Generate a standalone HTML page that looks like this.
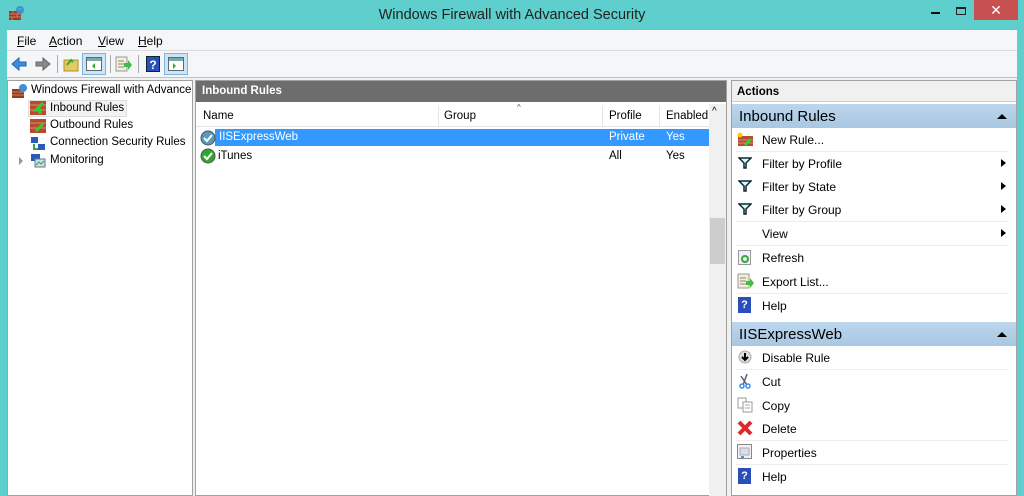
<!DOCTYPE html>
<html><head><style>
*{margin:0;padding:0;box-sizing:border-box}
body{width:1024px;height:496px;background:#5ecfcc;font-family:"Liberation Sans",sans-serif;font-size:11.5px;color:#000;position:relative;overflow:hidden}
.a{position:absolute;white-space:nowrap}
.title{left:0;top:7px;width:1024px;text-align:center;font-size:14.5px;color:#222}
.client{left:7px;top:30px;width:1010px;height:466px;background:#f0f0f0}
.menu{left:7px;top:30px;width:1010px;height:21px;background:#f5f6f7;border-bottom:1px solid #dadbdc}
.menu span{position:absolute;top:4px;font-size:12px}
.tb{left:7px;top:51px;width:1010px;height:27px;background:#f5f6f7;border-bottom:1px solid #bfc0c1}
.pane{background:#fff;border:1px solid #a0a0a0}
.act{position:absolute;left:762px;font-size:12px}
.sep{position:absolute;left:736px;width:272px;height:1px;background:#eceeee}
.tri{position:absolute;left:1001px;width:0;height:0;border-left:5px solid #000;border-top:4px solid transparent;border-bottom:4px solid transparent}
.funnel{position:absolute;left:738px;width:14px;height:12px}
</style></head><body>
<div class="a title">Windows Firewall with Advanced Security</div>
<svg class="a" style="left:8px;top:5px" width="18" height="16"><rect x="1" y="6" width="12" height="9" fill="#9a3a22"/><path d="M1 9h12M1 12h12M5 6v3M9 9v3M4 12v3" stroke="#d08060"/><circle cx="12" cy="5" r="4" fill="#3d8fd8"/><path d="M10 4h4" stroke="#6c6"/></svg>
<div class="a" style="left:931px;top:12px;width:9px;height:2px;background:#111"></div>
<div class="a" style="left:956px;top:7px;width:10px;height:8px;border:1px solid #222;border-top:2px solid #222"></div>
<div class="a" style="left:974px;top:0;width:44px;height:20px;background:#c75050;color:#fff;text-align:center;font-size:14px;line-height:20px">✕</div>
<div class="a client"></div>
<div class="a menu"><span style="left:10px"><u>F</u>ile</span><span style="left:42px"><u>A</u>ction</span><span style="left:91px"><u>V</u>iew</span><span style="left:131px"><u>H</u>elp</span></div>
<div class="a tb"></div>
<svg class="a" style="left:10px;top:55px" width="44" height="18"><path d="M2 9l7-6v4h7v4H9v4z" fill="#3b8ee0" stroke="#2266aa"/><path d="M40 9l-7-6v4h-7v4h7v4z" fill="#8a8a8a" stroke="#666"/></svg>
<div class="a" style="left:57px;top:55px;width:1px;height:18px;background:#aaa"></div>
<svg class="a" style="left:63px;top:56px" width="16" height="16"><rect x="1" y="4" width="14" height="11" fill="#e8c860" stroke="#b09030"/><path d="M4 9l4-5 2 2" stroke="#3a3" stroke-width="2" fill="none"/></svg>
<div class="a" style="left:82px;top:53px;width:24px;height:22px;background:#cce4f7;border:1px solid #7fb4e0"></div>
<svg class="a" style="left:86px;top:57px" width="16" height="15"><rect x=".5" y=".5" width="15" height="13" fill="#fff" stroke="#666"/><rect x="1" y="1" width="14" height="3" fill="#7aa"/><path d="M9 6l-3 3 3 3z" fill="#3a3"/></svg>
<div class="a" style="left:110px;top:55px;width:1px;height:18px;background:#aaa"></div>
<svg class="a" style="left:115px;top:56px" width="18" height="16"><rect x="1" y="1" width="11" height="14" fill="#f3f0d8" stroke="#999"/><path d="M3 5h6M3 8h6M3 11h6" stroke="#888"/><path d="M9 7h4v-3l4 5-4 5v-3H9z" fill="#4b4"/></svg>
<div class="a" style="left:138px;top:55px;width:1px;height:18px;background:#aaa"></div>
<div class="a" style="left:146px;top:56px;width:14px;height:16px;background:#2b4fb8;color:#fff;font-weight:bold;font-size:12px;text-align:center;line-height:16px;border:1px solid #123">?</div>
<div class="a" style="left:164px;top:53px;width:24px;height:22px;background:#cce4f7;border:1px solid #7fb4e0"></div>
<svg class="a" style="left:168px;top:57px" width="16" height="15"><rect x=".5" y=".5" width="15" height="13" fill="#fff" stroke="#666"/><rect x="1" y="1" width="14" height="3" fill="#7aa"/><path d="M5 6l3 3-3 3z" fill="#3a3"/></svg>

<!-- left pane -->
<div class="a pane" style="left:7px;top:80px;width:186px;height:416px"></div>
<svg class="a" style="left:11px;top:83px" width="18" height="16"><rect x="1" y="6" width="12" height="9" fill="#9a3a22"/><path d="M1 9h12M1 12h12" stroke="#d08060"/><circle cx="12" cy="5" r="4" fill="#3d8fd8"/></svg>
<div class="a" style="left:31px;top:84px;width:161px;overflow:hidden">Windows Firewall with Advance</div>
<div class="a" style="left:28px;top:100px;width:99px;height:17px;background:#f2f2f2;border:1px solid #ddd"></div>
<svg class="a" style="left:30px;top:101px" width="16" height="14"><rect width="16" height="14" fill="#b84a30"/><path d="M0 4h16M0 9h16" stroke="#e08a70"/><path d="M13 2l-7 7h4v4" stroke="#3c3" stroke-width="3" fill="none"/></svg>
<div class="a" style="left:50px;top:102px">Inbound Rules</div>
<svg class="a" style="left:30px;top:119px" width="16" height="14"><rect width="16" height="14" fill="#b84a30"/><path d="M0 4h16M0 9h16" stroke="#e08a70"/><path d="M6 12l7-7" stroke="#3c3" stroke-width="3" fill="none"/></svg>
<div class="a" style="left:50px;top:119px">Outbound Rules</div>
<svg class="a" style="left:30px;top:136px" width="16" height="16"><rect x="1" y="1" width="7" height="6" fill="#2a5cb8"/><rect x="8" y="8" width="7" height="6" fill="#2a5cb8"/><path d="M4 8v5h4" stroke="#3a3" stroke-width="2" fill="none"/></svg>
<div class="a" style="left:50px;top:136px">Connection Security Rules</div>
<div class="a" style="left:19px;top:157px;border-left:4px solid #999;border-top:4px solid transparent;border-bottom:4px solid transparent"></div>
<svg class="a" style="left:30px;top:153px" width="16" height="16"><rect x="1" y="1" width="9" height="7" fill="#2a5cb8"/><rect x="5" y="6" width="10" height="8" fill="#cde" stroke="#678"/><path d="M6 12l3-3 2 2 3-3" stroke="#3a3" fill="none"/></svg>
<div class="a" style="left:50px;top:154px">Monitoring</div>

<!-- middle -->
<div class="a" style="left:195px;top:80px;width:532px;height:416px;background:#fff;border:1px solid #a0a0a0"></div>
<div class="a" style="left:196px;top:81px;width:530px;height:21px;background:#6d6d6d;color:#fff;font-weight:bold;padding:4px 0 0 6px">Inbound Rules</div>
<div class="a" style="left:196px;top:105px;width:513px;height:22px;border-bottom:1px solid #e5e5e5"></div>
<div class="a" style="left:203px;top:110px">Name</div>
<div class="a" style="left:438px;top:106px;width:1px;height:21px;background:#e5e5e5"></div>
<div class="a" style="left:444px;top:110px">Group</div>
<div class="a" style="left:517px;top:103px;font-size:8px;color:#556">^</div>
<div class="a" style="left:602px;top:106px;width:1px;height:21px;background:#e5e5e5"></div>
<div class="a" style="left:609px;top:110px">Profile</div>
<div class="a" style="left:659px;top:106px;width:1px;height:21px;background:#e5e5e5"></div>
<div class="a" style="left:666px;top:110px">Enabled</div>
<div class="a" style="left:709px;top:104px;width:17px;height:392px;background:#f0f0f0"></div>
<div class="a" style="left:712px;top:106px;font-size:10px">^</div>
<div class="a" style="left:710px;top:218px;width:15px;height:46px;background:#cdcdcd"></div>
<div class="a" style="left:215px;top:129px;width:494px;height:17px;background:#3399ff"></div>
<svg class="a" style="left:200px;top:130px" width="16" height="16"><circle cx="8" cy="8" r="7" fill="#5a9ab8" stroke="#456"/><path d="M4 8l3 3 5-6" stroke="#fff" stroke-width="2" fill="none"/></svg>
<div class="a" style="left:219px;top:131px;color:#fff">IISExpressWeb</div>
<div class="a" style="left:609px;top:131px;color:#fff">Private</div>
<div class="a" style="left:666px;top:131px;color:#fff">Yes</div>
<svg class="a" style="left:200px;top:148px" width="16" height="16"><circle cx="8" cy="8" r="7" fill="#2ea82e" stroke="#555"/><path d="M4 8l3 3 5-6" stroke="#fff" stroke-width="2" fill="none"/></svg>
<div class="a" style="left:218px;top:150px">iTunes</div>
<div class="a" style="left:609px;top:150px">All</div>
<div class="a" style="left:666px;top:150px">Yes</div>

<!-- actions -->
<div class="a" style="left:731px;top:80px;width:286px;height:416px;background:#fff;border:1px solid #a0a0a0"></div>
<div class="a" style="left:732px;top:81px;width:284px;height:21px;background:#f0f0f0;border-bottom:1px solid #ccc;font-weight:bold;padding:5px 0 0 5px">Actions</div>
<div class="a" style="left:732px;top:104px;width:284px;height:24px;background:linear-gradient(#bcd6ec,#a9c7e3);font-size:15px;padding:4px 0 0 7px">Inbound Rules</div>
<div class="a" style="left:997px;top:114px;border-bottom:5px solid #000;border-left:5px solid transparent;border-right:5px solid transparent"></div>
<svg class="a" style="left:737px;top:132px" width="18" height="16"><rect x="1" y="4" width="15" height="10" fill="#b84a30"/><path d="M1 8h15M1 11h15" stroke="#e08a70"/><path d="M14 7l-6 6" stroke="#3c3" stroke-width="3"/><circle cx="3" cy="3" r="2.5" fill="#fc0"/></svg>
<div class="act" style="top:133px">New Rule...</div>
<div class="sep" style="top:151px"></div>
<svg class="funnel" style="top:157px"><path d="M1 1h12L8 6v5H6V6z" fill="#cfe" stroke="#123" stroke-width="1.5"/></svg>
<div class="act" style="top:157px">Filter by Profile</div><div class="tri" style="top:159px"></div>
<svg class="funnel" style="top:180px"><path d="M1 1h12L8 6v5H6V6z" fill="#cfe" stroke="#123" stroke-width="1.5"/></svg>
<div class="act" style="top:180px">Filter by State</div><div class="tri" style="top:182px"></div>
<svg class="funnel" style="top:203px"><path d="M1 1h12L8 6v5H6V6z" fill="#cfe" stroke="#123" stroke-width="1.5"/></svg>
<div class="act" style="top:203px">Filter by Group</div><div class="tri" style="top:205px"></div>
<div class="sep" style="top:221px"></div>
<div class="act" style="top:227px">View</div><div class="tri" style="top:229px"></div>
<div class="sep" style="top:245px"></div>
<svg class="a" style="left:738px;top:250px" width="14" height="16"><rect x=".5" y=".5" width="12" height="14" fill="#eef" stroke="#999"/><circle cx="7" cy="9" r="3" stroke="#3a3" stroke-width="2" fill="none"/></svg>
<div class="act" style="top:251px">Refresh</div>
<svg class="a" style="left:737px;top:273px" width="18" height="16"><rect x="1" y="1" width="11" height="14" fill="#f3f0d8" stroke="#999"/><path d="M3 5h6M3 8h6M3 11h6" stroke="#888"/><path d="M9 8h4v-3l4 5-4 5v-3H9z" fill="#4b4"/></svg>
<div class="act" style="top:275px">Export List...</div>
<div class="sep" style="top:293px"></div>
<div class="a" style="left:738px;top:297px;width:13px;height:16px;background:#2b4fb8;color:#fff;font-weight:bold;font-size:11px;text-align:center;line-height:16px">?</div>
<div class="act" style="top:299px">Help</div>
<div class="a" style="left:732px;top:322px;width:284px;height:24px;background:linear-gradient(#bcd6ec,#a9c7e3);font-size:15px;padding:4px 0 0 7px">IISExpressWeb</div>
<div class="a" style="left:997px;top:332px;border-bottom:5px solid #000;border-left:5px solid transparent;border-right:5px solid transparent"></div>
<svg class="a" style="left:738px;top:350px" width="14" height="14"><circle cx="7" cy="7" r="6" fill="#ddd" stroke="#aaa"/><path d="M7 3v6M4 7l3 3 3-3" stroke="#000" stroke-width="2" fill="none"/></svg>
<div class="act" style="top:351px">Disable Rule</div>
<div class="sep" style="top:369px"></div>
<svg class="a" style="left:738px;top:373px" width="14" height="16"><path d="M9 1L5 12M3 3l6 9" stroke="#567" stroke-width="1.5"/><circle cx="4" cy="13" r="2" stroke="#3a8ee0" fill="none" stroke-width="1.5"/><circle cx="10" cy="13" r="2" stroke="#3a8ee0" fill="none" stroke-width="1.5"/></svg>
<div class="act" style="top:375px">Cut</div>
<svg class="a" style="left:737px;top:397px" width="16" height="16"><rect x="1" y="1" width="8" height="10" fill="#fff" stroke="#999"/><rect x="6" y="5" width="9" height="10" fill="#fff" stroke="#999"/><path d="M8 8h5M8 11h5" stroke="#9ab"/></svg>
<div class="act" style="top:399px">Copy</div>
<svg class="a" style="left:737px;top:420px" width="16" height="16"><path d="M2 2l12 12M14 2L2 14" stroke="#e02828" stroke-width="4"/></svg>
<div class="act" style="top:422px">Delete</div>
<div class="sep" style="top:440px"></div>
<svg class="a" style="left:737px;top:444px" width="16" height="16"><rect x=".5" y=".5" width="14" height="14" fill="#f2f2f2" stroke="#888"/><rect x="3" y="4" width="9" height="7" fill="#dde" stroke="#aab"/><rect x="4" y="12" width="3" height="2" fill="#39f"/></svg>
<div class="act" style="top:446px">Properties</div>
<div class="sep" style="top:464px"></div>
<div class="a" style="left:738px;top:468px;width:13px;height:16px;background:#2b4fb8;color:#fff;font-weight:bold;font-size:11px;text-align:center;line-height:16px">?</div>
<div class="act" style="top:470px">Help</div>
</body></html>
